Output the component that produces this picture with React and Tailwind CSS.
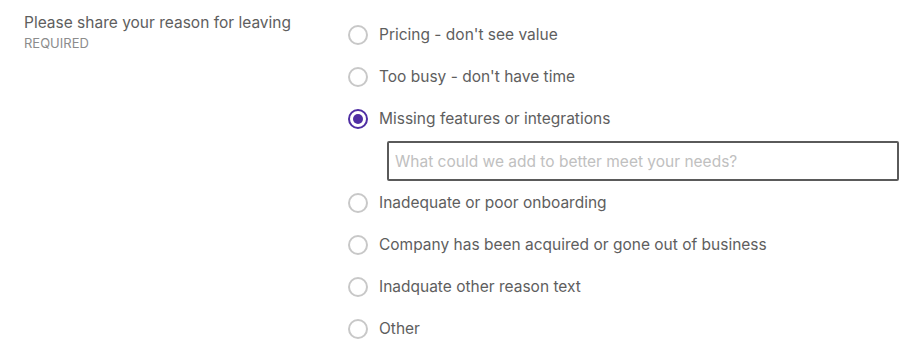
import React from "react";

const options = [
  "Pricing - don't see value",
  "Too busy - don't have time",
  "Missing features or integrations",
  "Inadequate or poor onboarding",
  "Company has been acquired or gone out of business",
  "Inadquate other reason text",
  "Other",
];

function Radio({ checked }) {
  return checked ? (
    <span className="flex h-[20px] w-[20px] shrink-0 items-center justify-center rounded-full border-2 border-[#4f2ea3]">
      <span className="h-[10px] w-[10px] rounded-full bg-[#4f2ea3]" />
    </span>
  ) : (
    <span className="h-[20px] w-[20px] shrink-0 rounded-full border-2 border-[#c8c8c8]" />
  );
}

export default function App() {
  return (
    <div className="flex bg-white pl-6 pt-[13px] text-[#5e5e5e]" style={{ fontFamily: "Inter, 'Noto Sans', sans-serif" }}>
      <div className="w-[324px] shrink-0">
        <div className="text-[15.5px] leading-[20px] text-[#5e5e5e]">Please share your reason for leaving</div>
        <div className="mt-[1px] text-[13px] leading-[18px] text-[#8c8c8c]">REQUIRED</div>
      </div>
      <div className="flex flex-col pt-px">
        {options.map((o, i) => (
          <React.Fragment key={o}>
            <label className="flex h-[42px] items-center gap-[11px]">
              <Radio checked={i === 2} />
              <span className="text-[15.5px] text-[#5e5e5e]">{o}</span>
            </label>
            {i === 2 && (
              <input
                className="my-px ml-[39px] h-[40px] w-[512px] rounded-[2px] border-2 border-[#5a5a5a] px-[6px] text-[15.5px] text-[#5e5e5e] outline-none placeholder:text-[#c0c0c0]"
                placeholder="What could we add to better meet your needs?"
              />
            )}
          </React.Fragment>
        ))}
      </div>
    </div>
  );
}
